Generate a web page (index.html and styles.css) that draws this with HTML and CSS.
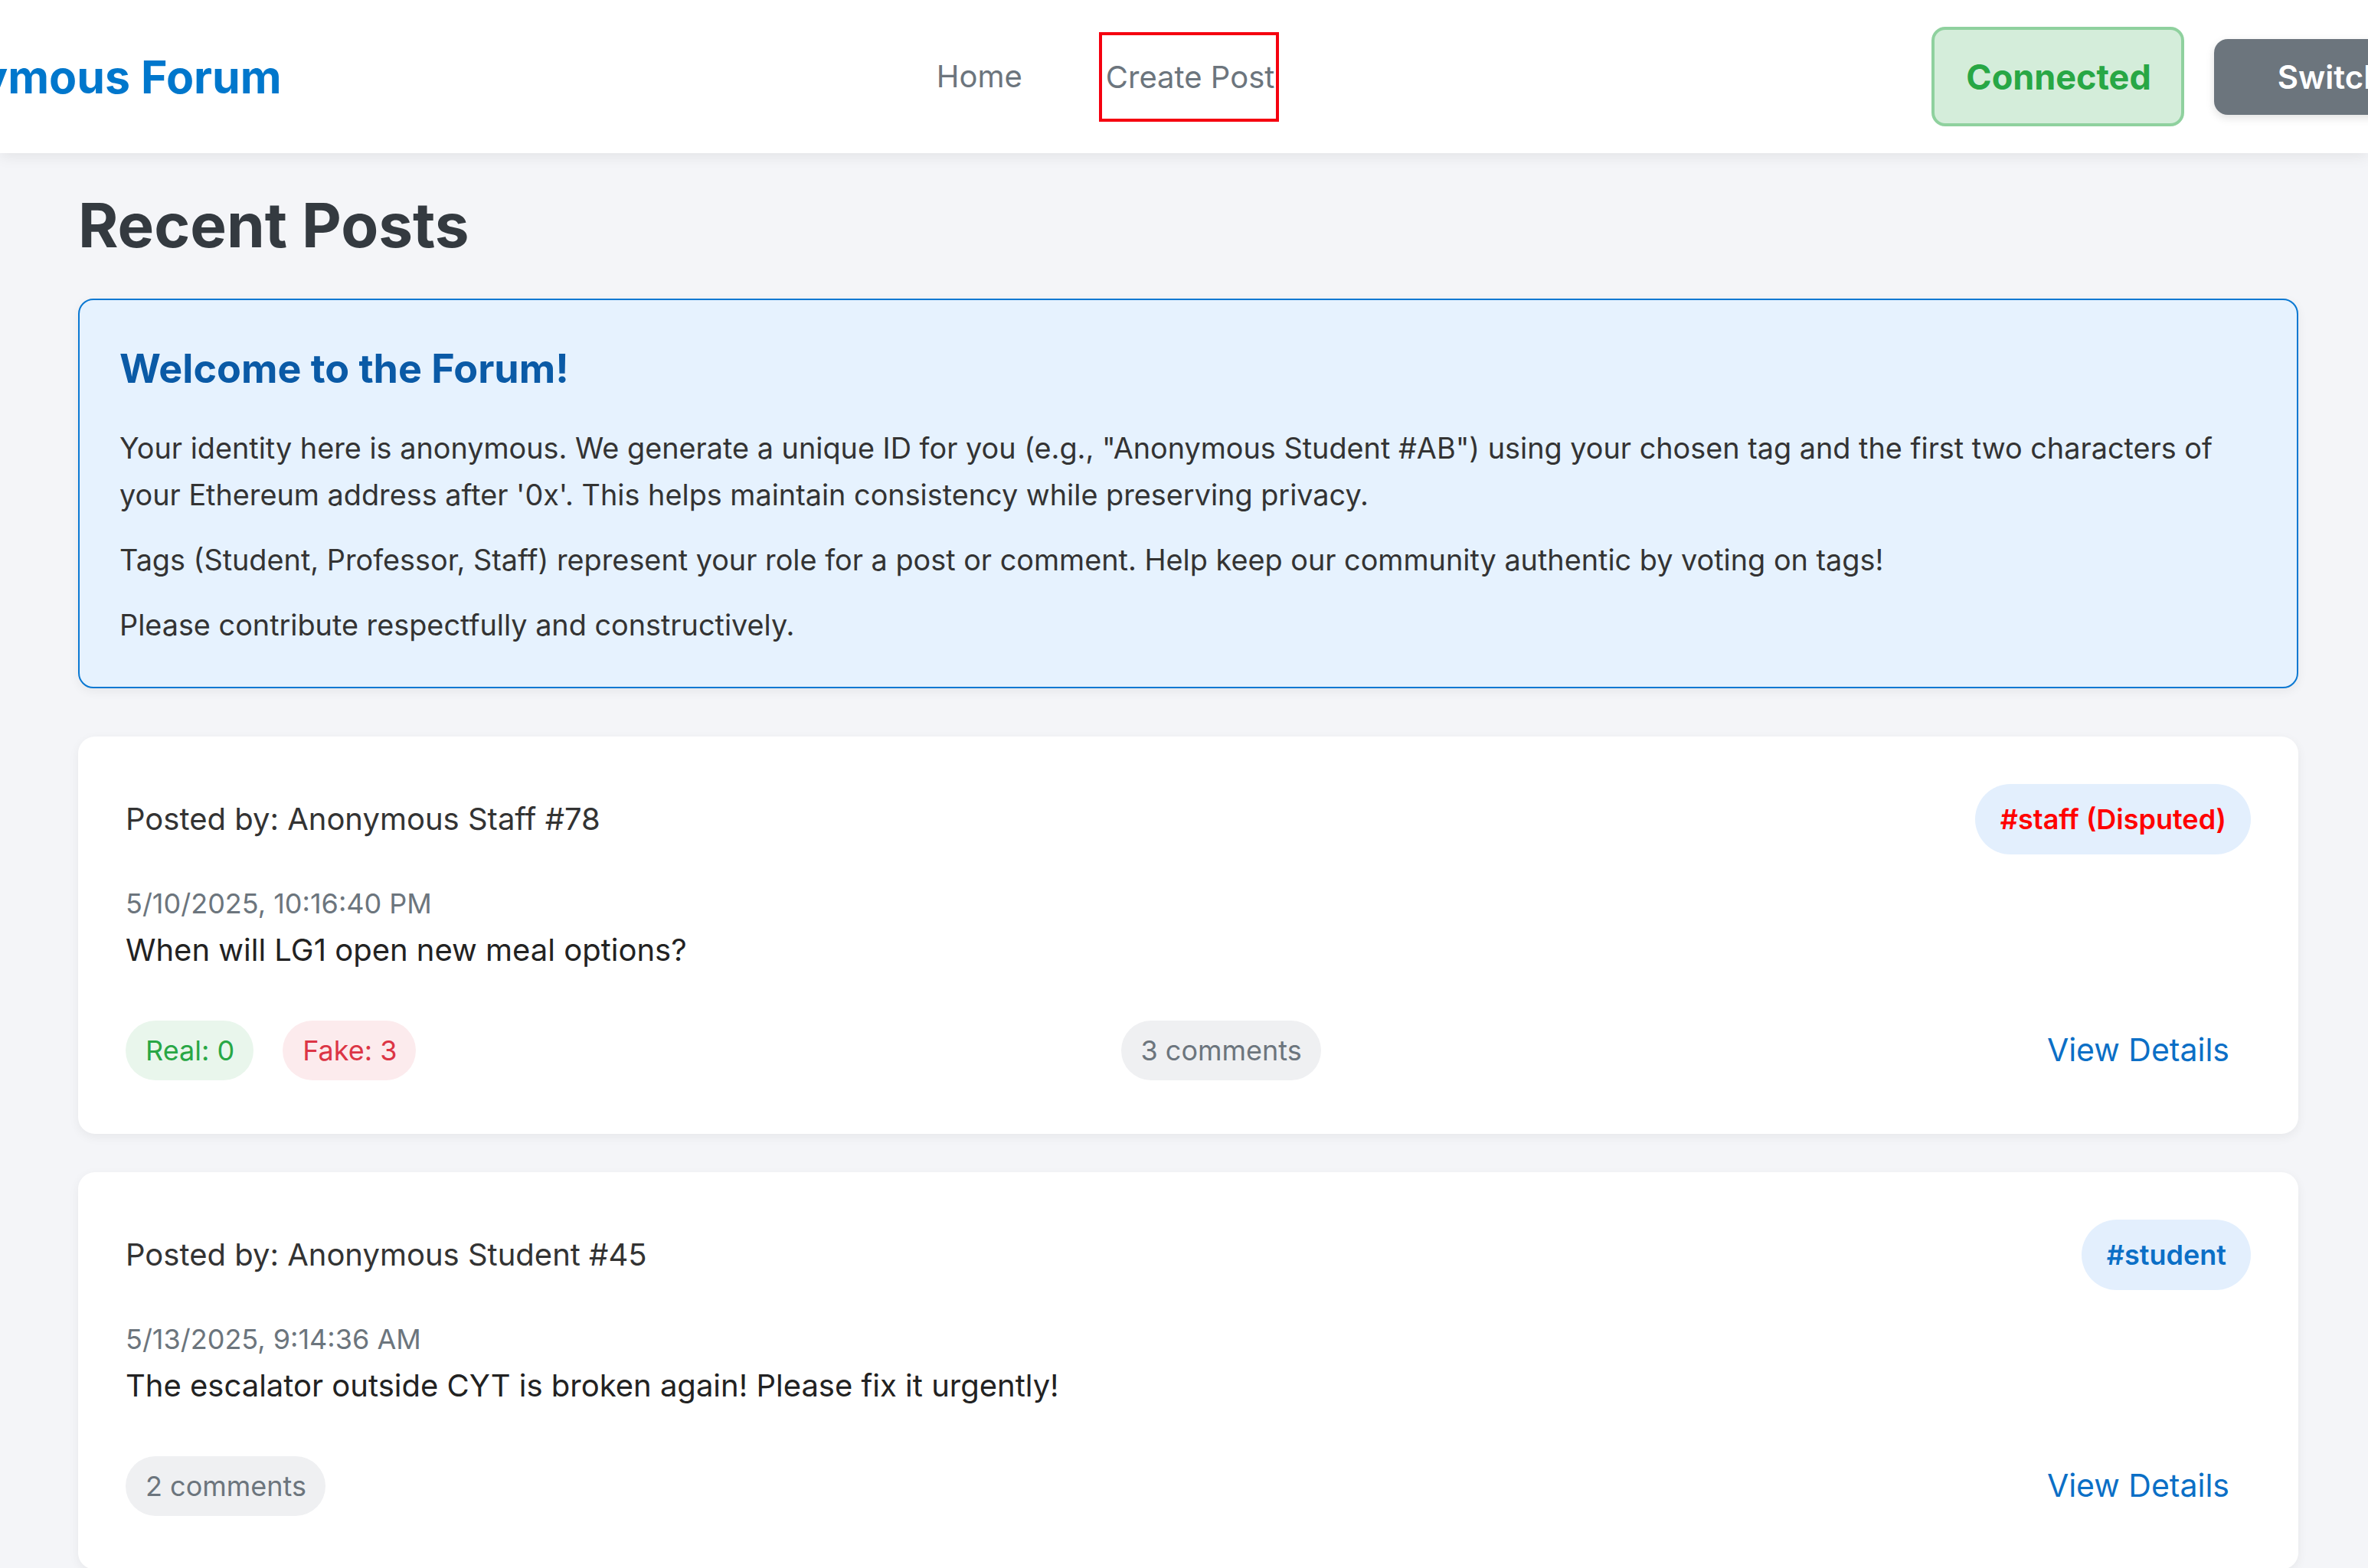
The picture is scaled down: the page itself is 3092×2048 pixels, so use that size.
FILE: index.html
```html
<!DOCTYPE html>
<html lang="en">
<head>
<meta charset="utf-8">
<title>Anonymous Forum</title>
<link rel="stylesheet" href="styles.css">
</head>
<body>
<header class="topbar">
  <div class="topbar-inner">
    <a class="logo" href="#">Anonymous Forum</a>
    <nav class="nav">
      <a class="nav-link" href="#">Home</a>
      <a class="nav-link nav-link-active" href="#">Create Post</a>
    </nav>
    <div class="actions">
      <span class="status-connected">Connected</span>
      <button class="btn-switch">Switch Account</button>
    </div>
  </div>
</header>

<main class="main">
  <h1 class="page-title">Recent Posts</h1>

  <section class="welcome">
    <h2 class="welcome-title">Welcome to the Forum!</h2>
    <p class="welcome-text">Your identity here is anonymous. We generate a unique ID for you (e.g., "Anonymous Student #AB") using your chosen tag and the first two characters of your Ethereum address after '0x'. This helps maintain consistency while preserving privacy.</p>
    <p class="welcome-text">Tags (Student, Professor, Staff) represent your role for a post or comment. Help keep our community authentic by voting on tags!</p>
    <p class="welcome-text">Please contribute respectfully and constructively.</p>
  </section>

  <article class="post">
    <div class="post-header">
      <span class="author">Posted by: Anonymous Staff #78</span>
      <span class="tag tag-disputed">#staff (Disputed)</span>
    </div>
    <div class="date">5/10/2025, 10:16:40 PM</div>
    <p class="content">When will LG1 open new meal options?</p>
    <div class="post-footer">
      <div class="votes">
        <span class="pill pill-real">Real: 0</span>
        <span class="pill pill-fake">Fake: 3</span>
      </div>
      <span class="pill pill-comments">3 comments</span>
      <a class="view-link" href="#">View Details</a>
    </div>
  </article>

  <article class="post">
    <div class="post-header">
      <span class="author">Posted by: Anonymous Student #45</span>
      <span class="tag tag-student">#student</span>
    </div>
    <div class="date">5/13/2025, 9:14:36 AM</div>
    <p class="content">The escalator outside CYT is broken again! Please fix it urgently!</p>
    <div class="post-footer">
      <span class="pill pill-comments">2 comments</span>
      <a class="view-link" href="#">View Details</a>
    </div>
  </article>
</main>
</body>
</html>
```

FILE: styles.css
```css
* { box-sizing: border-box; }

html, body {
  margin: 0;
  padding: 0;
}

body {
  background: #f4f5f8;
  font-family: Inter, "Noto Sans", "Liberation Sans", sans-serif;
  color: #333;
  overflow: hidden;
}

/* ---------- Header ---------- */
.topbar {
  height: 200px;
  background: #ffffff;
  box-shadow: 0 4px 18px rgba(0, 0, 0, 0.08);
  display: flex;
  align-items: center;
  overflow: hidden;
  position: relative;
  z-index: 2;
}

.topbar-inner {
  flex: none;
  display: flex;
  align-items: center;
  margin-left: -178px;
}

.logo {
  font-size: 59px;
  font-weight: 700;
  color: #0077cc;
  text-decoration: none;
  white-space: nowrap;
}

.nav {
  display: flex;
  align-items: center;
  gap: 100px;
  margin: 0 852px 0 855px;
}

.nav-link {
  font-size: 40px;
  color: #6c757d;
  text-decoration: none;
  line-height: 48px;
  white-space: nowrap;
}

.nav-link-active {
  border: 4px solid #f5000f;
  padding: 31px 2px 30px 5px;
}

.actions {
  display: flex;
  align-items: center;
  gap: 39px;
}

.status-connected {
  display: inline-flex;
  align-items: center;
  height: 130px;
  padding: 0 39px 0 41px;
  background: #d4edda;
  border: 4px solid #8fd19e;
  border-radius: 18px;
  color: #28a745;
  font-size: 45px;
  font-weight: 700;
  white-space: nowrap;
}

.btn-switch {
  height: 99px;
  padding: 0 60px 0 83px;
  background: #6c757d;
  border: none;
  border-radius: 18px;
  color: #ffffff;
  font-family: inherit;
  font-size: 42px;
  font-weight: 600;
  box-shadow: 0 4px 12px rgba(0, 0, 0, 0.12);
  white-space: nowrap;
}

/* ---------- Main ---------- */
.main {
  padding: 0 91px 0 102px;
}

.page-title {
  margin: 45px 0 48px;
  font-size: 80px;
  line-height: 97px;
  font-weight: 700;
  color: #343a40;
}

.welcome {
  background: #e6f2fe;
  border: 2px solid #0a78d2;
  border-radius: 20px;
  padding: 59px 52px 50px;
  margin-bottom: 63px;
  box-shadow: 0 4px 14px rgba(0, 0, 0, 0.06);
}

.welcome-title {
  margin: 0 0 42px;
  font-size: 52px;
  line-height: 62px;
  font-weight: 700;
  color: #0a5aa6;
}

.welcome-text {
  margin: 0 0 24px;
  font-size: 37.8px;
  line-height: 61px;
  color: #333;
}

.welcome-text:last-child {
  margin-bottom: 0;
}

/* ---------- Posts ---------- */
.post {
  background: #ffffff;
  border-radius: 22px;
  padding: 62px;
  margin-bottom: 50px;
  box-shadow: 0 4px 14px rgba(0, 0, 0, 0.06);
}

.post-header {
  display: flex;
  align-items: center;
  justify-content: space-between;
  margin-bottom: 44px;
}

.author {
  font-size: 40px;
  line-height: 48px;
  color: #333;
}

.tag {
  display: inline-flex;
  align-items: center;
  height: 92px;
  padding: 0 32px 0 33px;
  border-radius: 46px;
  background: #e3effd;
  font-size: 36px;
  font-weight: 600;
  white-space: nowrap;
}

.tag-disputed { color: #ff0000; }
.tag-student { color: #0b6fc6; }

.date {
  font-size: 36px;
  line-height: 41px;
  color: #6c757d;
  margin-bottom: 16px;
}

.content {
  margin: 0 0 61px;
  font-size: 40px;
  line-height: 47px;
  color: #222;
}

.post-footer {
  display: flex;
  align-items: center;
  justify-content: space-between;
}

.votes {
  display: flex;
  align-items: center;
  gap: 38px;
}

.pill {
  display: inline-flex;
  align-items: center;
  height: 78px;
  padding: 0 25px 0 26px;
  border-radius: 39px;
  font-size: 36px;
  white-space: nowrap;
}

.pill-real { background: #e9f6ec; color: #28a745; }
.pill-fake { background: #fcebed; color: #dc3545; }
.pill-comments { background: #eff0f2; color: #6c757d; }

.view-link {
  display: inline-block;
  padding: 23px 28px 24px;
  font-size: 41px;
  line-height: 47px;
  color: #0b6fc6;
  text-decoration: none;
}
```
